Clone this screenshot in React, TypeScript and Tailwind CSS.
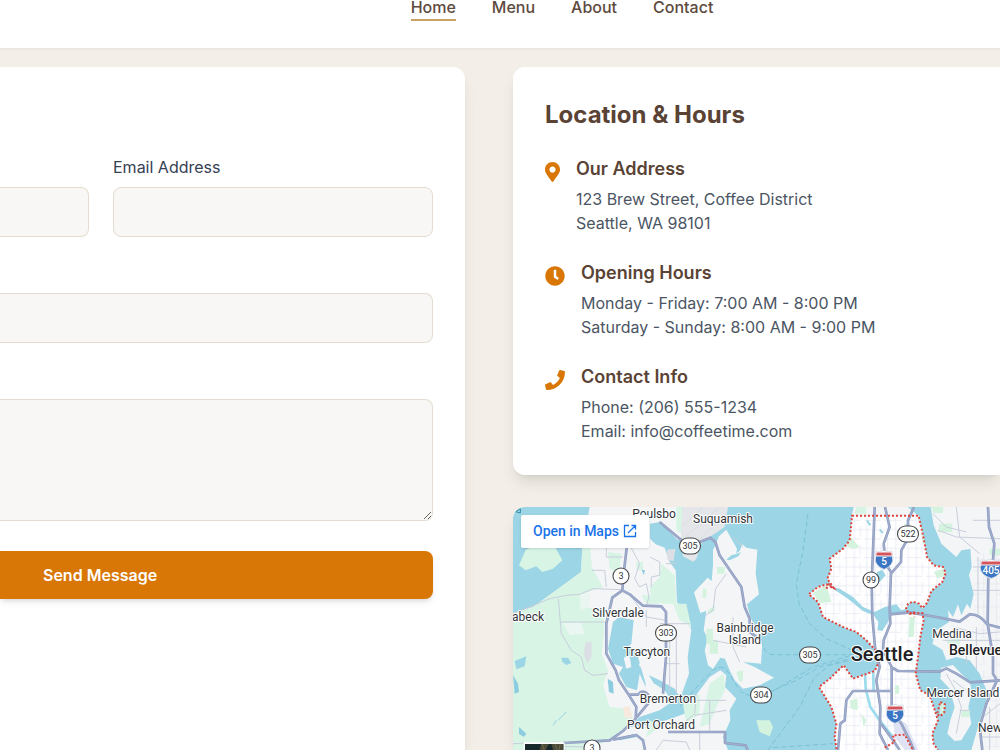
import { ReactNode } from 'react';
import { FaClock, FaMapMarkerAlt, FaPhone } from 'react-icons/fa';

const navLinks = ['Home', 'Menu', 'About', 'Contact'];

const fieldStyle =
  'block w-full border-[#e5dccf] bg-[#f8f7f5] px-4 py-3 text-base text-gray-700 focus:outline-none focus:border-[#d97706]';

const Header = () => (
  <header className="relative z-10 bg-white pb-[27px] shadow-[0_1px_3px_rgba(0,0,0,0.06)]">
    <nav className="flex justify-center gap-9 pl-[124px]">
      {navLinks.map((link) => (
        <a
          key={link}
          href={`#${link.toLowerCase()}`}
          className={`border-b-2 pb-[5px] text-base leading-[14px] font-medium text-[#5d4a3e] ${
            link === 'Home' ? 'border-[#c8a165]' : 'border-transparent'
          }`}
        >
          {link}
        </a>
      ))}
    </nav>
  </header>
);

const ContactForm = () => (
  <form
    className="rounded-tr-xl bg-white pt-[88px] pr-8 shadow-lg"
    onSubmit={(e) => e.preventDefault()}
  >
    <div className="flex items-end gap-6">
      <div className="w-[89px]">
        <input
          type="text"
          aria-label="Your Name"
          className={`${fieldStyle} h-[50px] rounded-r-lg border-y border-r`}
        />
      </div>
      <div className="flex-1">
        <label htmlFor="email" className="mb-2 block text-base text-gray-700">
          Email Address
        </label>
        <input id="email" type="email" className={`${fieldStyle} h-[50px] rounded-lg border`} />
      </div>
    </div>
    <input
      type="text"
      aria-label="Subject"
      className={`${fieldStyle} mt-14 h-[50px] rounded-r-lg border-y border-r`}
    />
    <textarea
      rows={4}
      aria-label="Message"
      className={`${fieldStyle} mt-14 h-[122px] resize-y rounded-r-lg border-y border-r`}
    />
    <button
      type="submit"
      className="mt-[30px] flex h-12 w-full items-center rounded-r-lg bg-[#d97706] pl-[43px] text-base font-semibold text-white shadow-md"
    >
      Send Message
    </button>
  </form>
);

interface InfoItemProps {
  icon: ReactNode;
  title: string;
  lines: string[];
}

const InfoItem = ({ icon, title, lines }: InfoItemProps) => (
  <div className="flex items-start gap-4">
    <div className="mt-[7px] text-xl text-[#d97706]">{icon}</div>
    <div>
      <h3 className="mb-1 text-lg leading-7 font-semibold text-[#5a4335]">{title}</h3>
      {lines.map((line) => (
        <p key={line} className="text-base leading-6 text-[#4b5563]">
          {line}
        </p>
      ))}
    </div>
  </div>
);

const LocationCard = () => (
  <section className="rounded-l-xl bg-white p-8 shadow-lg">
    <h2 className="mb-6 text-2xl leading-8 font-bold text-[#5a4335]">Location &amp; Hours</h2>
    <div className="flex flex-col gap-6">
      <InfoItem
        icon={<FaMapMarkerAlt className="h-5 w-[15px]" />}
        title="Our Address"
        lines={['123 Brew Street, Coffee District', 'Seattle, WA 98101']}
      />
      <InfoItem
        icon={<FaClock />}
        title="Opening Hours"
        lines={['Monday - Friday: 7:00 AM - 8:00 PM', 'Saturday - Sunday: 8:00 AM - 9:00 PM']}
      />
      <InfoItem
        icon={<FaPhone />}
        title="Contact Info"
        lines={['Phone: (206) 555-1234', 'Email: info@coffeetime.com']}
      />
    </div>
  </section>
);

// Shapes are drawn in thirds of a label unit
const SEATTLE =
  'M1017 26H1217L1222 50 1228 75 1235 110 1242 150 1262 175 1290 180 1298 198 1288 225 1255 252 1242 288 1228 303 1218 290 1200 284 1185 290 1178 308 1190 320 1228 318 1232 340 1222 390 1215 450 1208 500 1222 550 1250 565 1262 600 1275 640 1258 680 1262 710 1278 735H972L965 690 970 650 955 600 918 540 950 515 992 475 1020 515 1085 492 1095 470 1088 430 1060 400 1030 375 990 360 930 330 915 285 887 262 915 240 940 232 962 243 943 215 955 185 950 155 990 125 1010 100 1015 50Z';

const MAIN_ROADS = [
  'M341 123L332 200 328 250 298 272 280 350V440L308 490 318 520 345 560 370 600 368 635 330 672 290 700 150 708',
  'M328 250L350 262 390 296 445 298 459 315V450L450 560',
  'M345 563H375Q390 545 405 563V590L370 632',
  'M300 698L370 684 390 700 396 729',
  'M465 675H636V708L698 715 704 729',
  'M440 45L500 95 530 117 560 105 592 92 607 105 620 145 685 240 695 300 710 335V375L745 400',
  'M1085 0L1080 130 1076 230 1078 330 1086 420 1100 480 1090 520 1102 600 1100 680 1125 729',
  'M1116 0L1130 60 1112 110 1118 170 1134 195 1130 300 1132 350 1112 400 1110 430 1136 480V610L1165 650 1190 700 1202 729',
  'M1203 0L1185 40V95L1165 130 1164 165 1134 200',
  'M1130 322L1190 316 1270 330 1340 344 1370 322Q1400 320 1422 352L1461 362',
  'M1134 480L1155 492 1280 494 1300 484 1330 500 1372 526 1461 520',
  'M1425 0L1428 60 1444 110 1440 160 1426 200 1424 350 1440 450 1440 500 1452 520 1420 590 1400 660 1408 729',
  'M1132 552H1020L1000 580 995 640 982 650 975 729',
  'M1104 650L1140 700 1160 729',
];

const MINOR_ROADS = [
  'M0 320L50 300 110 275 160 265 200 262 240 245 325 248',
  'M136 275L145 380 175 430 205 450 215 490 240 505 285 500',
  'M145 345H280M355 123L380 170 365 215 380 240 400 230 408 270 400 295M411 150L440 165V205L415 210V240',
  'M280 123V150L330 150M236 190H275L280 240M459 170H490M440 350H530M470 400V560M490 380V560M459 470H500M400 310V360M350 262L400 330 459 340',
  'M0 710L140 705 160 729M60 715L210 720',
  'M640 200L608 245 600 310 578 325M660 90L690 120M660 330V420L680 465M600 400L700 420',
  'M550 560L545 620 510 650V675M550 580H640M590 580V670M545 625L640 610M430 729L450 700 520 705 530 729M560 675V729',
  'M1260 20L1300 60 1360 75M1275 70L1330 90 1461 95M1330 0L1340 90 1400 140M1461 40H1380M1380 180H1461M1395 150V330M1380 250H1461M1320 360L1400 380 1461 375M1290 400H1461M1360 410V470M1390 360V490M1461 590L1410 630M1430 600V729M1400 690H1461',
  'M1300 500L1325 545 1345 600 1330 680M1320 520L1360 550M1340 610H1372',
];

const PARKS = [
  'M612 180H635V200H612ZM570 245H580V272H568ZM585 310L605 295V312L585 322ZM580 365H600V400H615V440H590V410H580Z',
  'M670 495L690 490V520L680 525ZM730 640L770 640 780 660 770 688 740 675Z',
  'M900 258L940 232 955 285 920 288ZM1012 90L1040 120 1020 125 1000 118ZM1262 195L1290 185 1296 205 1275 215ZM1175 50H1190V75H1172Z',
  'M1190 330H1206L1202 390H1186ZM1226 75L1235 110 1228 110ZM1010 580L1034 575V610L1014 605ZM1045 620L1060 640 1052 660ZM1146 535H1158V560H1146Z',
  'M1255 0H1290V18H1262ZM1280 50H1318V75H1275ZM1300 400L1340 395V412L1305 410ZM1430 125H1461V145H1430ZM1345 610H1370V630H1345ZM1282 585L1296 595 1290 625 1280 620Z',
];

const FERRIES = [
  'M885 20L870 130 850 230 858 290 890 350 940 395 1030 435',
  'M745 400Q755 443 780 443H1030',
  'M500 600L560 530 600 490Q630 470 645 495L680 550Q700 570 745 566L850 520 920 480 1020 452',
  'M780 552L900 480 1010 446',
  'M765 729L860 600 905 510 950 475 1020 458',
  'M780 722L960 710',
];

const placeNames = [
  { name: 'Poulsbo', x: 141, y: 11 },
  { name: 'Suquamish', x: 210, y: 16 },
  { name: 'Silverdale', x: 105, y: 110 },
  { name: 'Tracyton', x: 134, y: 149 },
  { name: 'Bremerton', x: 155, y: 196 },
  { name: 'Port Orchard', x: 148, y: 222 },
  { name: 'Bainbridge', x: 232, y: 125 },
  { name: 'Island', x: 232, y: 137 },
  { name: 'Medina', x: 439, y: 131 },
  { name: 'Mercer Island', x: 450, y: 190 },
];

const routes = [
  { id: '3', x: 108, y: 69 },
  { id: '3', x: 79, y: 241 },
  { id: '99', x: 358, y: 73 },
  { id: '305', x: 177, y: 39 },
  { id: '303', x: 153, y: 126 },
  { id: '305', x: 297, y: 148 },
  { id: '304', x: 248, y: 188 },
  { id: '522', x: 395, y: 27 },
];

const interstates = [
  { id: '5', x: 371, y: 53 },
  { id: '5', x: 382, y: 207 },
  { id: '405', x: 478, y: 62 },
];

const RouteShield = ({ id, x, y }: { id: string; x: number; y: number }) => {
  const width = id.length > 2 ? 21 : 16;
  return (
    <g transform={`translate(${x} ${y})`}>
      <rect x={-width / 2} y={-8} width={width} height={16} rx={8} fill="#fff" stroke="#45484c" strokeWidth={1.1} />
      <text y={3} textAnchor="middle" fontSize={9} fill="#303336">
        {id}
      </text>
    </g>
  );
};

const InterstateShield = ({ id, x, y }: { id: string; x: number; y: number }) => {
  const half = id.length > 1 ? 11 : 9;
  return (
    <g transform={`translate(${x} ${y})`}>
      <path
        d={`M${-half + 1} -9Q${-half / 2} -8 0 -9.5Q${half / 2} -8 ${half - 1} -9Q${half + 3} 5 0 10Q${-half - 3} 5 ${-half + 1} -9Z`}
        fill="#fff"
        stroke="#b7bfd0"
        strokeWidth={0.5}
      />
      <path d={`M${-half + 1.8} -7.6H${half - 1.8}L${half - 1.2} -4.6H${-half + 1.2}Z`} fill="#d3545a" />
      <path d={`M${-half + 1} -3.6H${half - 1}Q${half + 1} 5 0 9Q${-half - 1} 5 ${-half + 1} -3.6Z`} fill="#3b76c4" />
      <text y={5} textAnchor="middle" fontSize={10} fontWeight={500} fill="#fff">
        {id}
      </text>
    </g>
  );
};

const SeattleMap = () => (
  <svg
    viewBox="0 0 487 243"
    preserveAspectRatio="xMinYMin slice"
    className="absolute inset-0 h-full w-full font-[Roboto,sans-serif]"
    role="img"
    aria-label="Map of Seattle"
  >
    <defs>
      <clipPath id="city">
        <path d={SEATTLE} />
      </clipPath>
      <pattern id="streets" width="62" height="56" patternUnits="userSpaceOnUse">
        <path d="M8 0V56M32 0V56M50 0V34M0 12H62M0 40H50" stroke="#e6eaf4" strokeWidth="2.5" fill="none" />
      </pattern>
      <pattern id="suburb" width="80" height="70" patternUnits="userSpaceOnUse">
        <path d="M10 0V70M52 0V44M0 20H80M10 52H60" stroke="#e3e6ee" strokeWidth="2" fill="none" />
      </pattern>
    </defs>
    <g transform="scale(0.33333)">
      <rect width="1461" height="740" fill="#9cd5e5" />

      {/* Kitsap peninsula */}
      <path
        d="M230 0H508V90L495 100 440 45 411 50V95L428 112 455 122 470 165 488 190 492 285 520 320 535 370 524 450 528 500 505 565 440 610 380 630 350 660 395 655 460 640 515 620 545 570 590 510 622 490 640 505 636 540 670 575 650 610 652 640 630 690 645 729H0V318L60 300 150 235 204 195 208 124Z"
        fill="#f3f5f7"
      />
      <path
        d="M0 320L60 300 150 235 204 195 208 124H232L236 180 270 240 210 260 200 300 270 305 274 370 266 440 285 490 270 535 290 600 335 605 362 640 290 700 210 729H0Z"
        fill="#d7f4e5"
      />
      <path d="M62 118L38 128 18 175 38 190 70 178 88 195 120 185 148 160 125 118Z" fill="#d7f4e5" />
      <path
        d="M200 262L232 258 228 300 205 310ZM150 348H205L215 380 170 385Z"
        fill="#eaf6f1"
      />
      <path
        d="M285 135L325 140 318 200 290 185ZM445 170L485 205 490 290 450 290 415 275 410 240 440 210ZM370 165H390V190H370ZM385 265H440V290H400ZM490 0H508V82L490 70ZM480 290H520L535 360 500 340ZM590 530L632 500 636 550 610 600 590 650 560 660ZM510 590L560 560 560 620 520 650ZM410 640L440 660 400 690ZM300 640L330 655 290 690ZM180 395H212V430H180Z"
        fill="#d7f4e5"
      />
      <path d="M218 405H236V450L222 470 212 440ZM462 128L487 125 482 162 463 160Z" fill="#dcdfe5" />
      <path d="M330 600L350 598 358 630 335 632Z" fill="#f7e9dc" />
      <path
        d="M508 0H645L635 60 590 90 565 110 550 155 541 164 510 148 503 105Z"
        fill="#e4e6e9"
      />
      <path d="M512 95L620 0M530 125L640 20M510 55L570 0" stroke="#dadde1" strokeWidth="3" />

      {/* Dyes Inlet and small lakes */}
      <path
        d="M300 345L318 330 362 340 355 410 340 425 395 425 378 475 398 500 440 520 485 545 508 580 488 600 455 550 425 530 400 545 380 500 372 550 340 540 318 500 330 480 300 470 285 425Z"
        fill="#9cd5e5"
      />
      <path d="M332 452L350 445 355 480 340 485ZM375 450L390 430 405 500 438 555H395L398 530Z" fill="#f3f5f7" />
      <path
        d="M145 452H165L175 468 160 474 148 465ZM5 462L40 448 35 478 10 487Z"
        fill="#9cd5e5"
      />
      <path d="M0 505L15 530 18 555 5 560ZM284 515L300 525 302 560 288 555ZM18 660L40 680 32 690 18 680ZM386 188L396 190 392 205ZM310 695L360 682 370 690 320 700Z" fill="#8dcbe0" />
      <path d="M135 640L160 615M120 655L130 640" stroke="#9ccfe0" strokeWidth="3" />

      {/* Bainbridge Island */}
      <path
        d="M640 68L618 88 600 130 600 175 596 222 584 212 543 256 562 318 580 312 572 370 584 395 575 430 585 475 600 486 622 452 636 455 650 490 665 520 690 545 740 535 783 512 725 480 690 465 744 470 748 405 712 330 702 292 738 262 728 200 733 128 700 122 688 112 680 132 640 160 655 148 668 150 672 125Z"
        fill="#f3f5f7"
      />
      <path d="M640 158L655 145 672 140 684 135 676 148 650 160Z" fill="#9cd5e5" />

      {/* Eastside and Mercer Island */}
      <path
        d="M1253 0L1262 55 1285 110 1330 150 1345 130 1372 126 1376 180 1368 205 1382 260 1372 305 1362 290 1345 325 1335 292 1320 330 1305 310 1308 345 1270 370 1258 410 1288 428 1300 460 1330 450 1370 460 1400 500 1425 560 1410 610 1395 660 1375 729H1461V0Z"
        fill="#f3f5f7"
      />
      <path
        d="M1285 482L1320 474 1345 500 1372 525 1375 560 1366 600 1375 650 1345 700 1325 702 1303 680 1312 640 1325 600 1310 545 1282 515Z"
        fill="#f3f5f7"
      />
      <path d="M1385 130H1461V720H1420L1430 560 1400 490 1385 300Z" fill="url(#suburb)" />
      <path d="M1022 0H1184L1216 26H1016Z" fill="#f3f5f7" />
      <path d="M1030 0H1060V20H1025Z" fill="#d7f4e5" />

      {/* Seattle */}
      <path d={SEATTLE} fill="#fff" />
      <g clipPath="url(#city)">
        <rect x="880" width="430" height="740" fill="url(#streets)" />
        <path d="M1140 625L1180 650 1215 729H1175L1145 690Z" fill="#dfe3f4" />
        <path
          d="M950 238L980 245 1020 270 1050 300 1085 315 1115 300 1150 292 1165 310 1180 305 1180 322 1135 322 1125 345 1108 372 1093 370 1096 345 1082 325 1050 312 1005 275 970 252ZM1092 195L1108 188 1118 205 1100 225 1090 215Z"
          fill="#9cd5e5"
        />
        <path d="M1055 480L1058 545 1072 600 1100 640 1140 690M1080 480L1082 550" stroke="#9cdcec" strokeWidth="8" fill="none" />
        <path d="M1062 40L1072 55M1100 68L1110 78" stroke="#9cd5e5" strokeWidth="6" />
      </g>
      {PARKS.map((d) => (
        <path key={d} d={d} fill="#d3f3de" />
      ))}

      {FERRIES.map((d) => (
        <path key={d} d={d} fill="none" stroke="#74bdd3" strokeWidth="2.5" strokeDasharray="16 8" />
      ))}
      {MINOR_ROADS.map((d) => (
        <path key={d} d={d} fill="none" stroke="#c9cedb" strokeWidth="3" strokeLinejoin="round" />
      ))}
      {MAIN_ROADS.map((d) => (
        <path key={d} d={d} fill="none" stroke="#8d9bc0" strokeWidth="8" strokeLinejoin="round" />
      ))}
      {MAIN_ROADS.map((d) => (
        <path key={d} d={d} fill="none" stroke="#a1adcb" strokeWidth="4" strokeLinejoin="round" />
      ))}

      <path d={SEATTLE} fill="none" stroke="#e0443c" strokeWidth="6" strokeDasharray="6 6" />
      <path
        d="M1190 320L1202 316 1204 328M1282 585L1296 592 1294 615 1282 628 1272 622 1282 585M1115 722L1145 705 1140 685 1175 683 1200 729M940 245L948 232 960 245"
        fill="none"
        stroke="#e0443c"
        strokeWidth="6"
        strokeDasharray="6 6"
      />
      <path d="M8 14L22 18V5Z" fill="none" stroke="#2e8ba3" strokeWidth="3" />

      {/* Satellite thumbnail */}
      <rect x="32" y="706" width="123" height="60" rx="4" fill="#fff" />
      <rect x="36" y="711" width="115" height="60" fill="#17282b" />
      <path d="M84 711H108L98 729H80ZM115 711H151V729H120Z" fill="#4a4b39" />
      <path d="M88 711L94 729M126 711L132 729M142 711L138 729" stroke="#6b6650" strokeWidth="3" />
    </g>

    {routes.map((route) => (
      <RouteShield key={`${route.id}-${route.x}`} {...route} />
    ))}
    {interstates.map((route) => (
      <InterstateShield key={`${route.id}-${route.x}`} {...route} />
    ))}

    <g fill="#2f3337" stroke="#fff" strokeWidth={2} strokeLinejoin="round" paintOrder="stroke">
      {placeNames.map(({ name, x, y }) => (
        <text key={name} x={x} y={y} fontSize={12} textAnchor="middle">
          {name}
        </text>
      ))}
      <text x={31} y={114} fontSize={12} textAnchor="end">
        Seabeck
      </text>
      <text x={465} y={225} fontSize={12}>
        Newcastle
      </text>
      <text x={436} y={148} fontSize={14} fontWeight={500} fill="#202124">
        Bellevue
      </text>
      <text x={369} y={154} fontSize={20} fontWeight={500} fill="#202124" textAnchor="middle">
        Seattle
      </text>
    </g>
  </svg>
);

const MapCard = () => (
  <section className="relative min-h-[243px] flex-1 overflow-hidden rounded-tl-xl shadow-lg">
    <SeattleMap />
    <a
      href="#map"
      className="absolute top-2 left-2 flex h-[33px] items-center gap-1 rounded-xs bg-white px-3 pb-px font-[Roboto,sans-serif] text-sm font-medium text-[#1a73e8] shadow-sm"
    >
      Open in Maps
      <svg viewBox="0 0 14 14" className="h-[14px] w-[14px]" fill="none" stroke="currentColor" strokeWidth="1.3">
        <path d="M6 1.5H1.5V12.5H12.5V8M8.5 1.5H12.5V5.5M12.3 1.7L5 9" />
      </svg>
    </a>
  </section>
);

const App = () => {
  return (
    <div className="flex min-h-screen flex-col overflow-x-hidden bg-[#f3efe8] font-[Inter,sans-serif]">
      <Header />
      <main className="grid flex-1 grid-cols-[465fr_487fr] gap-12 pt-[19px]">
        <ContactForm />
        <div className="flex min-w-0 flex-col gap-8">
          <LocationCard />
          <MapCard />
        </div>
      </main>
    </div>
  );
};

export default App;
